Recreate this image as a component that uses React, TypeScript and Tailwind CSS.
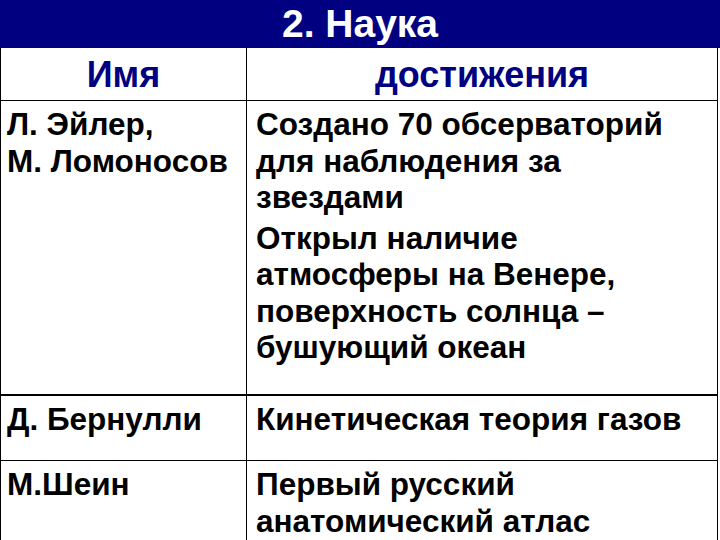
const font = { fontFamily: '"Liberation Sans", Arial, sans-serif' };

function Cell({ children, right }: { children: React.ReactNode; right?: boolean }) {
  return (
    <div className={`${right ? "pl-[9px]" : "pl-[6px] border-r border-black"} pt-[5px] text-[31.5px] leading-[36.5px] font-bold text-black`}>
      {children}
    </div>
  );
}

export default function App() {
  return (
    <div className="w-[720px] h-[540px] overflow-hidden bg-white" style={font}>
      <div className="h-[48px] bg-[#000080] flex items-center justify-center">
        <h1 className="text-[39px] font-bold text-white leading-none mt-[-2px]">2. Наука</h1>
      </div>
      <div className="w-[718px] border-l border-r border-black">
        <div className="grid grid-cols-[246px_1fr] h-[53px] border-b border-black">
          <div className="border-r border-black flex items-center justify-center text-[36px] font-bold text-[#000080]">
            Имя
          </div>
          <div className="flex items-center justify-center text-[36px] font-bold text-[#000080]">
            достижения
          </div>
        </div>
        <div className="grid grid-cols-[246px_1fr] h-[295px] border-b-2 border-black">
          <Cell>
            Л. Эйлер,
            <br />
            М. Ломоносов
          </Cell>
          <Cell right>
            <p>
              Создано 70 обсерваторий
              <br />
              для наблюдения за
              <br />
              звездами
            </p>
            <p className="mt-[4px]">
              Открыл наличие
              <br />
              атмосферы на Венере,
              <br />
              поверхность солнца –
              <br />
              бушующий океан
            </p>
          </Cell>
        </div>
        <div className="grid grid-cols-[246px_1fr] h-[65px] border-b border-black">
          <Cell>Д. Бернулли</Cell>
          <Cell right>Кинетическая теория газов</Cell>
        </div>
        <div className="grid grid-cols-[246px_1fr] h-[100px]">
          <Cell>М.Шеин</Cell>
          <Cell right>
            Первый русский
            <br />
            анатомический атлас
          </Cell>
        </div>
      </div>
    </div>
  );
}
